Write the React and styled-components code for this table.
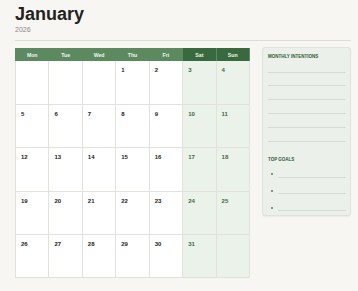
import React from "react";
import styled, { createGlobalStyle } from "styled-components";

const Global = createGlobalStyle`
  html, body { margin: 0; padding: 0; background: #f7f6f2; }
  body { font-family: "Liberation Sans", Arial, sans-serif; }
`;

const Page = styled.div`
  padding: 4.7px 7px 0 15px;
  width: 358px;
  box-sizing: border-box;
`;

const Title = styled.h1`
  margin: 0;
  font-size: 18px;
  line-height: 18px;
  font-weight: 700;
  color: #222220;
`;

const Year = styled.div`
  margin-top: 3.3px;
  font-size: 7px;
  line-height: 7px;
  color: #8a8985;
`;

const Divider = styled.hr`
  margin: 7px 0 0;
  border: 0;
  height: 1px;
  background: #dedcd6;
`;

const Main = styled.div`
  display: flex;
  align-items: flex-start;
  gap: 12px;
  margin-top: 6px;
`;

const Calendar = styled.div`
  width: 235px;
  margin-top: 1px;
  display: flex;
  flex-direction: column;
`;

const HeaderRow = styled.div`
  display: grid;
  grid-template-columns: repeat(7, 1fr);
  gap: 1px;
  padding: 0 1px;
  height: 13.5px;
  background: #5b8a5f;
`;

const DayName = styled.div`
  display: flex;
  align-items: center;
  justify-content: center;
  font-size: 5.2px;
  font-weight: 700;
  color: #f2f6f1;
  background: ${(p) => (p.$weekend ? "#376a3d" : "#5b8a5f")};
`;

const Body = styled.div`
  display: grid;
  grid-template-columns: repeat(7, 1fr);
  grid-auto-rows: 42.4px;
  gap: 1px;
  padding: 0 1px 1px;
  background: #e3e1db;
`;

const Cell = styled.div`
  padding: 6px 0 0 5px;
  background: ${(p) => (p.$weekend ? "#ebf2ea" : "#ffffff")};
  font-size: 6px;
  line-height: 6px;
  font-weight: 700;
  color: ${(p) => (p.$weekend ? "#3b6b42" : "#222220")};
`;

const Sidebar = styled.aside`
  width: 89px;
  box-sizing: border-box;
  padding: 6px 4px 3.5px 5px;
  background: #ebf1ea;
  border: 1px solid #dde3da;
  border-radius: 3px;
  box-shadow: 0 1px 1px rgba(0, 0, 0, 0.05);
`;

const SectionTitle = styled.div`
  font-size: 4.5px;
  line-height: 6px;
  font-weight: 700;
  color: #2e5a34;
  margin-top: ${(p) => p.$top || 0}px;
`;

const LineList = styled.div`
  display: flex;
  flex-direction: column;
  gap: 12.8px;
  padding-top: 11.7px;
`;

const Rule = styled.div`
  height: 1px;
  background: #d6dcd3;
  flex: ${(p) => (p.$grow ? 1 : "none")};
`;

const GoalList = styled.div`
  display: flex;
  flex-direction: column;
  gap: 4.7px;
  margin-top: 2.7px;
`;

const GoalRow = styled.div`
  display: flex;
  align-items: flex-end;
  height: 12px;
`;

const Dot = styled.span`
  width: 2px;
  height: 2px;
  border-radius: 50%;
  background: #4f8055;
  margin: 0 5px 2.4px 2.7px;
`;

const days = ["Mon", "Tue", "Wed", "Thu", "Fri", "Sat", "Sun"];

// January 2026 starts on a Thursday: three blank cells first, one after the 31st
const cells = [null, null, null, ...Array.from({ length: 31 }, (_, i) => i + 1), null];

export default function App() {
  return (
    <>
      <Global />
      <Page>
        <Title>January</Title>
        <Year>2026</Year>
        <Divider />
        <Main>
          <Calendar>
            <HeaderRow>
              {days.map((d, i) => (
                <DayName key={d} $weekend={i >= 5}>
                  {d}
                </DayName>
              ))}
            </HeaderRow>
            <Body>
              {cells.map((n, i) => (
                <Cell key={i} $weekend={i % 7 >= 5}>
                  {n}
                </Cell>
              ))}
            </Body>
          </Calendar>
          <Sidebar>
            <SectionTitle>MONTHLY INTENTIONS</SectionTitle>
            <LineList>
              {Array.from({ length: 6 }, (_, i) => (
                <Rule key={i} />
              ))}
            </LineList>
            <SectionTitle $top={15.3}>TOP GOALS</SectionTitle>
            <GoalList>
              {[0, 1, 2].map((i) => (
                <GoalRow key={i}>
                  <Dot />
                  <Rule $grow />
                </GoalRow>
              ))}
            </GoalList>
          </Sidebar>
        </Main>
      </Page>
    </>
  );
}
